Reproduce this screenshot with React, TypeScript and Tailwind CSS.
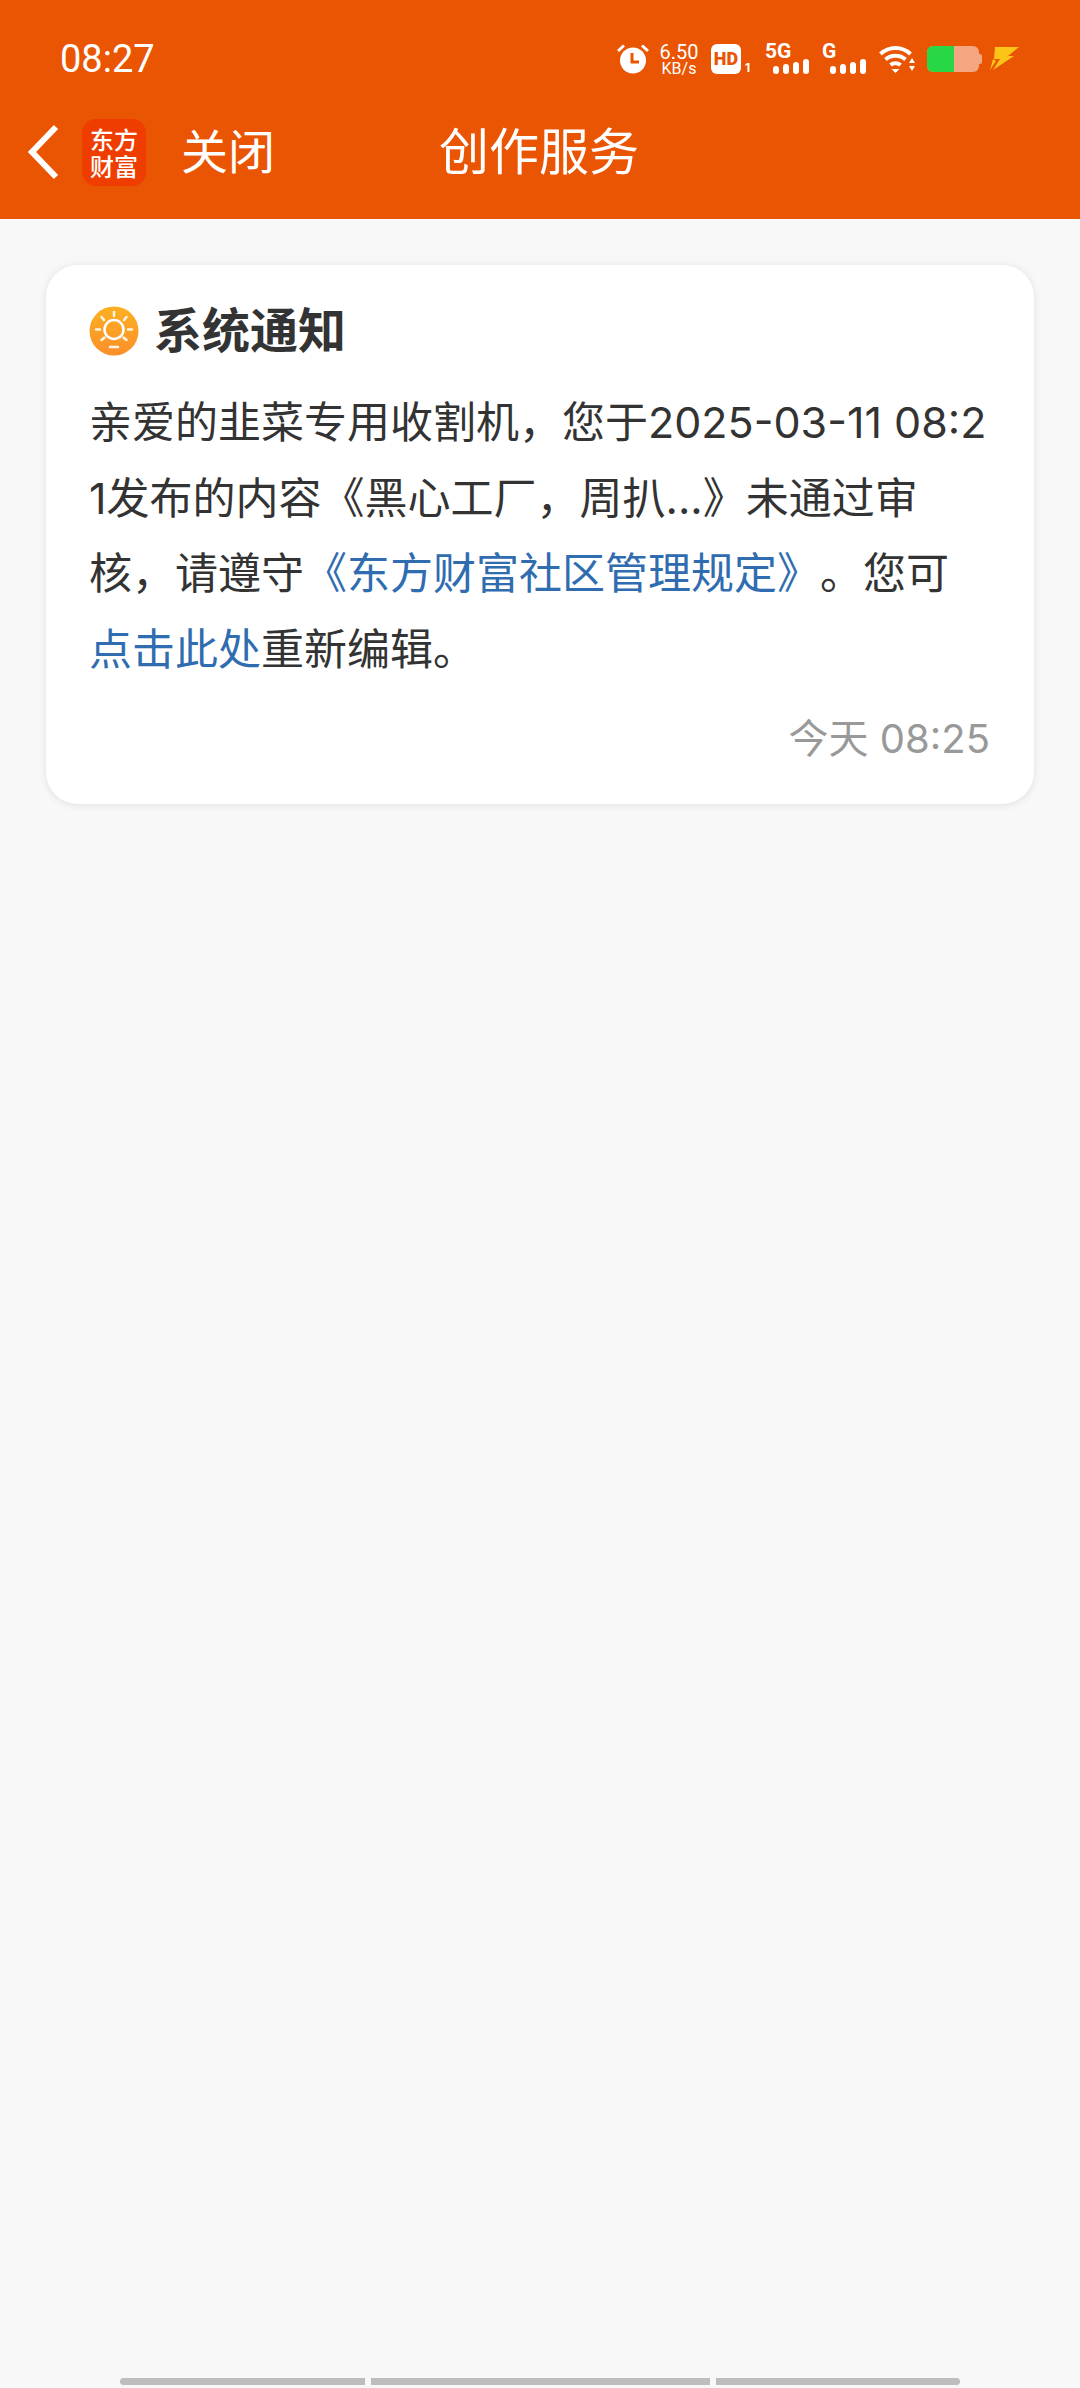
const cjk = "font-['Inter','Noto_Sans_CJK_SC',sans-serif]"

function AlarmIcon() {
  return (
    <svg width="32" height="30" viewBox="0 0 32 30" className="shrink-0">
      <circle cx="16" cy="16.500" r="13" fill="#fff" />
      <path d="M15 9v9h7" fill="none" stroke="#ea5504" strokeWidth="3" />
      <path d="M1 7 7 1.500M31 7l-6-5.500" stroke="#fff" strokeWidth="3" />
    </svg>
  )
}

function SignalBars({ label, labelLeft, className }: { label: string; labelLeft: string; className: string }) {
  return (
    <div className={`relative w-[44px] h-[30px] shrink-0 ${className}`}>
      <span className={`absolute ${labelLeft} top-[-4px] text-[21px] leading-[22px] font-bold text-white font-['Roboto',sans-serif]`}>
        {label}
      </span>
      <div className="absolute right-0 bottom-0 flex items-end gap-[4px]">
        <div className="w-[6px] h-[8px] rounded-[3px] bg-white" />
        <div className="w-[6px] h-[10px] rounded-[3px] bg-white" />
        <div className="w-[6px] h-[12px] rounded-[3px] bg-white" />
        <div className="w-[6px] h-[15px] rounded-[3px] bg-white" />
      </div>
    </div>
  )
}

function WifiIcon() {
  return (
    <svg width="36" height="28" viewBox="0 0 36 28" className="shrink-0 ml-[13px]">
      <path d="M1.500 9C10 1 23 1 31.500 9" fill="none" stroke="#fff" strokeWidth="4" />
      <path d="M6.500 14.500C12 9.500 21 9.500 26.500 14.500" fill="none" stroke="#fff" strokeWidth="4" />
      <path d="M11.500 20c3-2.500 7-2.500 10 0" fill="none" stroke="#fff" strokeWidth="4" />
      <path d="M12.500 24h8l-4 4z" fill="#fff" />
      <path d="M30 18h6l-3-5zM30 21h6l-3 5z" fill="#fff" />
    </svg>
  )
}

function BoltIcon() {
  return (
    <svg width="30" height="26" viewBox="0 0 30 26" className="shrink-0 ml-[8px]">
      <path d="M5 1h24L18 10h6L3 24l7-11H4z" fill="#fcc419" />
      <path d="M3 13 0 24l6-9z" fill="#fcc419" />
    </svg>
  )
}

function SunIcon() {
  return (
    <svg width="50" height="50" viewBox="0 0 50 50" className="shrink-0">
      <defs>
        <linearGradient id="sunBg" x1="0" y1="0" x2="0" y2="1">
          <stop offset="0" stopColor="#fdb022" />
          <stop offset="1" stopColor="#fb8f2a" />
        </linearGradient>
      </defs>
      <circle cx="25" cy="25" r="24.500" fill="url(#sunBg)" />
      <circle cx="25" cy="23.500" r="9.500" fill="none" stroke="#fff" strokeWidth="2.500" />
      <path
        d="M25 6v4M12.500 11l2.500 3M37.500 11 35 14M7 23.500h4M39 23.500h4M12.500 34l3-2.500M37.500 34l-3-2.500M21 41h8"
        stroke="#fff"
        strokeWidth="2.500"
        strokeLinecap="round"
        opacity="0.9"
      />
    </svg>
  )
}

export default function App() {
  return (
    <div className={`w-[1080px] h-[2388px] flex flex-col bg-[#f8f8f8] ${cjk}`}>
      <header className="h-[219px] bg-[#ea5504] text-white shrink-0">
        <div className="h-[98px] pt-[20px] pl-[60px] pr-[60px] flex justify-between items-center">
          <span className="text-[38px] leading-[44px] font-['Roboto',sans-serif]">08:27</span>
          <div className="flex items-center">
            <AlarmIcon />
            <div className="ml-[10px] flex flex-col items-center w-[40px] font-['Roboto',sans-serif]">
              <span className="text-[20px] leading-[20px]">6.50</span>
              <span className="text-[16px] leading-[14px]">KB/s</span>
            </div>
            <div className="ml-[12px] w-[41px] flex items-end gap-[4px]">
              <div className="w-[30px] h-[30px] rounded-[6px] bg-white text-[#ea5504] text-[18px] leading-[30px] font-black text-center font-['Roboto',sans-serif]">
                HD
              </div>
              <span className="text-[12px] leading-[12px] font-bold">1</span>
            </div>
            <SignalBars label="5G" labelLeft="left-0" className="ml-[13px]" />
            <SignalBars label="G" labelLeft="left-0" className="ml-[13px]" />
            <WifiIcon />
            <div className="ml-[12px] flex items-center">
              <div className="w-[52px] h-[26px] rounded-[6px] overflow-hidden flex bg-[#f4a582]">
                <div className="w-[27px] bg-[#29d646]" />
              </div>
              <div className="w-[3px] h-[10px] bg-[#f4a582] rounded-r-[2px]" />
            </div>
            <BoltIcon />
          </div>
        </div>
        <div className="h-[108px] flex items-center pl-[26px]">
          <svg width="34" height="56" viewBox="0 0 34 56" className="shrink-0">
            <path d="M30 3 6 28l24 25" fill="none" stroke="#fff" strokeWidth="6" />
          </svg>
          <div className="ml-[22px] w-[64px] h-[67px] rounded-[14px] bg-[#ef3d00] flex flex-col items-center justify-center font-['Noto_Sans_CJK_SC',sans-serif] font-medium text-[24px] leading-[27px]">
            <span>东方</span>
            <span>财富</span>
          </div>
          <span className="ml-[35px] text-[47px] leading-[60px]">关闭</span>
          <h1 className="ml-[164px] text-[50px] leading-[60px] font-normal">创作服务</h1>
        </div>
      </header>
      <main className="px-[46px] pt-[46px]">
        <div className="h-[539px] rounded-[32px] bg-white shadow-[0_1px_8px_rgba(0,0,0,0.10)] pl-[43px] pr-[44px] pt-[36px]">
          <div className="flex items-center gap-[15px]">
            <SunIcon />
            <h2 className="text-[48px] leading-[60px] font-bold text-[#333]">系统通知</h2>
          </div>
          <p className="mt-[24px] text-[43px] leading-[75.500px] text-[#333] break-all [text-spacing-trim:space-all] [font-feature-settings:'chws'_0]">
            亲爱的韭菜专用收割机，您于2025-03-11 08:21发布的内容《黑心工厂，周扒...》未通过审核，请遵守
            <span className="text-[#2f6cb0]">《东方财富社区管理规定》</span>
            。您可
            <span className="text-[#2f6cb0]">点击此处</span>
            重新编辑。
          </p>
          <div className="mt-[22px] text-right text-[40px] leading-[60px] text-[#999]">今天 08:25</div>
        </div>
      </main>
      <div className="mt-auto mb-[3px] px-[120px] flex gap-[6px]">
        <div className="w-[245px] h-[7px] rounded-l-[4px] bg-[#bdbdbd]" />
        <div className="w-[339px] h-[7px] bg-[#bdbdbd]" />
        <div className="w-[244px] h-[7px] rounded-r-[4px] bg-[#bdbdbd]" />
      </div>
    </div>
  )
}
